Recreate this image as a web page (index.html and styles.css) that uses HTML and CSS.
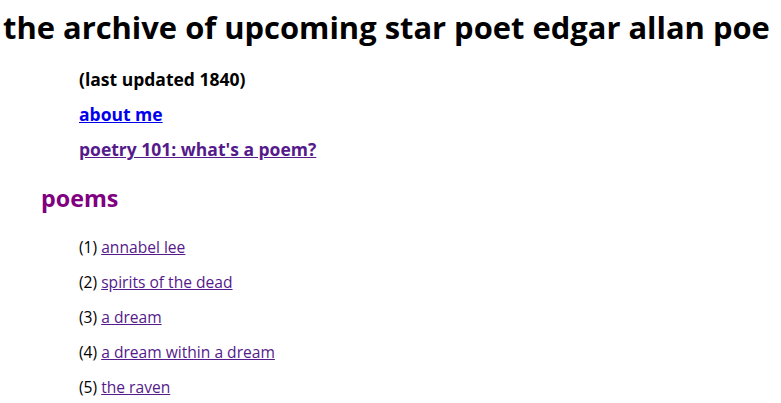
FILE: index.html
```html
<!DOCTYPE html>
<html lang="en">
<head>
<meta charset="utf-8">
<title>the archive of upcoming star poet edgar allan poe</title>
<link rel="stylesheet" href="styles.css">
</head>
<body>
<h1 class="title">the archive of upcoming star poet edgar allan poe</h1>
<div class="intro">
  <p class="updated">(last updated 1840)</p>
  <p class="nav"><a class="link-new" href="#about">about me</a></p>
  <p class="nav"><a class="link-visited" href="#poetry101">poetry 101: what's a poem?</a></p>
</div>
<h2 class="section">poems</h2>
<ul class="poems">
  <li>(1) <a href="#annabel-lee">annabel lee</a></li>
  <li>(2) <a href="#spirits-of-the-dead">spirits of the dead</a></li>
  <li>(3) <a href="#a-dream">a dream</a></li>
  <li>(4) <a href="#a-dream-within-a-dream">a dream within a dream</a></li>
  <li>(5) <a href="#the-raven">the raven</a></li>
</ul>
</body>
</html>
```

FILE: styles.css
```css
html, body {
  margin: 0;
  padding: 0;
  background: #ffffff;
}
body {
  font-family: "Open Sans", "Noto Sans", "Liberation Sans", sans-serif;
  color: #000000;
  overflow: hidden;
}
.title {
  margin: 7px 0 15px 0;
  padding-left: 3px;
  font-size: 30.9px;
  line-height: 40px;
  font-weight: 700;
  white-space: nowrap;
}
.intro {
  padding-left: 79px;
}
.updated, .nav {
  margin: 0;
  font-size: 17.5px;
  line-height: 35px;
  font-weight: 700;
}
.link-new {
  color: #0000ee;
}
.link-visited {
  color: #551a8b;
}
.section {
  margin: 15px 0 16px 0;
  padding-left: 41px;
  font-size: 23.3px;
  line-height: 32px;
  font-weight: 700;
  color: #800080;
}
.poems {
  list-style: none;
  margin: 0;
  padding-left: 79px;
  font-size: 15.6px;
  line-height: 35px;
}
.poems a {
  color: #551a8b;
}
```
